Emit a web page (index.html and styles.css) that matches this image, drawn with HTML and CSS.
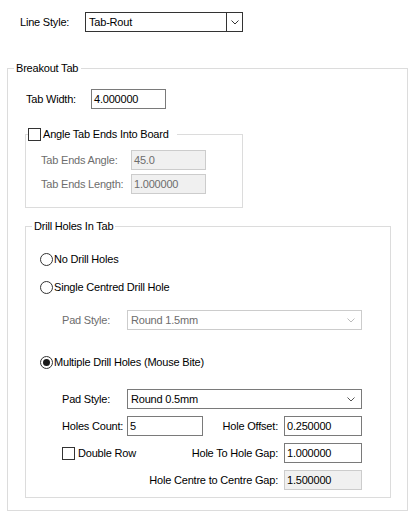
FILE: index.html
```html
<!DOCTYPE html>
<html>
<head>
<meta charset="utf-8">
<link rel="stylesheet" href="styles.css">
</head>
<body>
<div class="page">
  <div class="top">
    <span class="lbl-top">Line Style:</span>
    <div class="combo combo-main">
      <span class="val">Tab-Rout</span>
      <span class="btn"><svg width="8" height="5" viewBox="0 0 8 5"><path d="M0.5 0.5 L4 4 L7.5 0.5" fill="none" stroke="#333" stroke-width="1"/></svg></span>
    </div>
  </div>

  <fieldset class="breakout">
    <legend class="lg-breakout">Breakout Tab</legend>
    <div class="breakout-inner">
      <div class="tw-row">
        <span class="tw-lbl">Tab Width:</span>
        <div class="field tw-field">4.000000</div>
      </div>

      <fieldset class="angle">
        <legend class="lg-angle"><span class="check"></span><span>Angle Tab Ends Into Board</span></legend>
        <div class="angle-inner">
          <div class="arow">
            <span class="a-lbl dis">Tab Ends Angle:</span>
            <div class="field field-dis a-field">45.0</div>
          </div>
          <div class="arow arow2">
            <span class="a-lbl dis">Tab Ends Length:</span>
            <div class="field field-dis a-field">1.000000</div>
          </div>
        </div>
      </fieldset>

      <fieldset class="drill">
        <legend class="lg-drill">Drill Holes In Tab</legend>
        <div class="drill-inner">
          <div class="radio"><span class="circle"></span><span class="rtext">No Drill Holes</span></div>
          <div class="radio r2"><span class="circle"></span><span class="rtext">Single Centred Drill Hole</span></div>
          <div class="pad-dis">
            <span class="p-lbl dis">Pad Style:</span>
            <div class="combo combo-pad combo-dis">
              <span class="val">Round 1.5mm</span>
              <span class="chev"><svg width="8" height="5" viewBox="0 0 8 5"><path d="M0.5 0.5 L4 4 L7.5 0.5" fill="none" stroke="#bcbcbc" stroke-width="1"/></svg></span>
            </div>
          </div>
          <div class="radio r3"><span class="circle"><span class="dot"></span></span><span class="rtext">Multiple Drill Holes (Mouse Bite)</span></div>
          <div class="grid">
            <span class="g-lbl">Pad Style:</span>
            <div class="combo combo-pad span3">
              <span class="val">Round 0.5mm</span>
              <span class="chev"><svg width="8" height="5" viewBox="0 0 8 5"><path d="M0.5 0.5 L4 4 L7.5 0.5" fill="none" stroke="#555" stroke-width="1"/></svg></span>
            </div>
            <span class="g-lbl">Holes Count:</span>
            <div class="field">5</div>
            <span class="g-rlbl">Hole Offset:</span>
            <div class="field">0.250000</div>
            <div class="dbl span2"><span class="check"></span><span class="dtext">Double Row</span></div>
            <span class="g-rlbl">Hole To Hole Gap:</span>
            <div class="field">1.000000</div>
            <span class="g-rlbl span3l">Hole Centre to Centre Gap:</span>
            <div class="field field-ro">1.500000</div>
          </div>
        </div>
      </fieldset>
    </div>
  </fieldset>
</div>
</body>
</html>
```
FILE: styles.css
```css
html, body {
  margin: 0;
  background: #fff;
}
body {
  font-family: "Liberation Sans", Arial, sans-serif;
  font-size: 11px;
  letter-spacing: -0.2px;
  color: #000;
}
.page {
  padding: 12px 4px 0 7px;
}
.top {
  display: flex;
  align-items: center;
  height: 20px;
  padding-left: 13px;
}
.lbl-top {
  width: 65px;
}
.combo {
  display: flex;
  align-items: center;
  box-sizing: border-box;
  height: 20px;
  border: 1px solid #7a7a7a;
  background: #fff;
}
.combo .val {
  flex: 1;
  padding-left: 3px;
  white-space: nowrap;
}
.combo-main {
  width: 158px;
  border-color: #333;
}
.combo-main .btn {
  align-self: stretch;
  width: 16px;
  box-sizing: border-box;
  border-left: 1px solid #333;
  display: flex;
  align-items: center;
  justify-content: center;
}
.combo-main .btn svg,
.combo-pad .chev svg {
  display: block;
}
.combo-pad {
  width: 235px;
}
.combo-pad .chev {
  width: 16px;
  display: flex;
  align-items: center;
  justify-content: center;
  margin-right: 2px;
}
.combo-dis {
  border-color: #cccccc;
  color: #6d6d6d;
}
fieldset {
  margin: 0;
  padding: 0;
  min-width: 0;
  border: 1px solid #dcdcdc;
}
legend {
  line-height: 14px;
}
.breakout {
  margin-top: 29px;
}
.breakout-inner {
  padding: 14px 0 12px 17px;
}
.lg-breakout {
  margin-left: 6px;
  padding: 0 3px 0 2px;
}
.tw-row {
  display: flex;
  align-items: center;
  margin-left: 1px;
}
.tw-lbl {
  width: 65px;
}
.field {
  box-sizing: border-box;
  height: 20px;
  border: 1px solid #7a7a7a;
  background: #fff;
  padding-left: 2px;
  display: flex;
  align-items: center;
  white-space: nowrap;
}
.tw-field {
  width: 75px;
}
.field-dis {
  border-color: #cccccc;
  background: #f0f0f0;
  color: #6d6d6d;
}
.field-ro {
  border-color: #cccccc;
  background: #f0f0f0;
}
.dis {
  color: #6d6d6d;
}
.angle {
  margin-top: 18px;
  width: 218px;
  box-sizing: border-box;
}
.angle-inner {
  padding: 9px 0 13px 15px;
}
.lg-angle {
  margin-left: 2px;
  padding: 0 8px 0 0;
  display: flex;
  align-items: center;
}
.check {
  display: inline-block;
  width: 13px;
  height: 13px;
  box-sizing: border-box;
  border: 1px solid #333;
  background: #fff;
  margin-right: 2px;
}
.arow {
  display: flex;
  align-items: center;
}
.arow2 {
  margin-top: 4px;
}
.a-lbl {
  width: 90px;
}
.a-field {
  width: 75px;
}
.drill {
  margin-top: 11px;
  width: 366px;
  box-sizing: border-box;
}
.drill-inner {
  padding: 19px 0 7px 14px;
}
.lg-drill {
  margin-left: 6px;
  padding: 0 2px;
}
.radio {
  display: flex;
  align-items: center;
  height: 14px;
}
.circle {
  width: 13px;
  height: 13px;
  box-sizing: border-box;
  border: 1px solid #333;
  border-radius: 50%;
  background: #fff;
  display: flex;
  align-items: center;
  justify-content: center;
  margin-right: 1px;
}
.circle .dot {
  width: 7px;
  height: 7px;
  border-radius: 50%;
  background: #1a1a1a;
}
.r2 {
  margin-top: 14px;
}
.pad-dis {
  display: flex;
  align-items: center;
  margin-top: 16px;
  margin-left: 22px;
}
.p-lbl {
  width: 65px;
}
.r3 {
  margin-top: 25px;
}
.grid {
  display: grid;
  grid-template-columns: 65px 76px minmax(0, 1fr) 78px;
  grid-template-rows: 20px 20px 20px 20px;
  row-gap: 7px;
  align-items: center;
  width: 300px;
  margin-top: 20px;
  margin-left: 22px;
}
.grid > .combo-pad {
  margin-bottom: 2px;
  align-self: start;
}
.span3 {
  grid-column: 2 / 5;
  width: auto;
}
.span2 {
  grid-column: 1 / 3;
}
.span3l {
  grid-column: 1 / 4;
}
.g-lbl {
  white-space: nowrap;
}
.g-rlbl {
  justify-self: end;
  white-space: nowrap;
  padding-right: 6px;
}
.dbl {
  display: flex;
  align-items: center;
}
.dbl .check {
  margin-right: 3px;
}
```
